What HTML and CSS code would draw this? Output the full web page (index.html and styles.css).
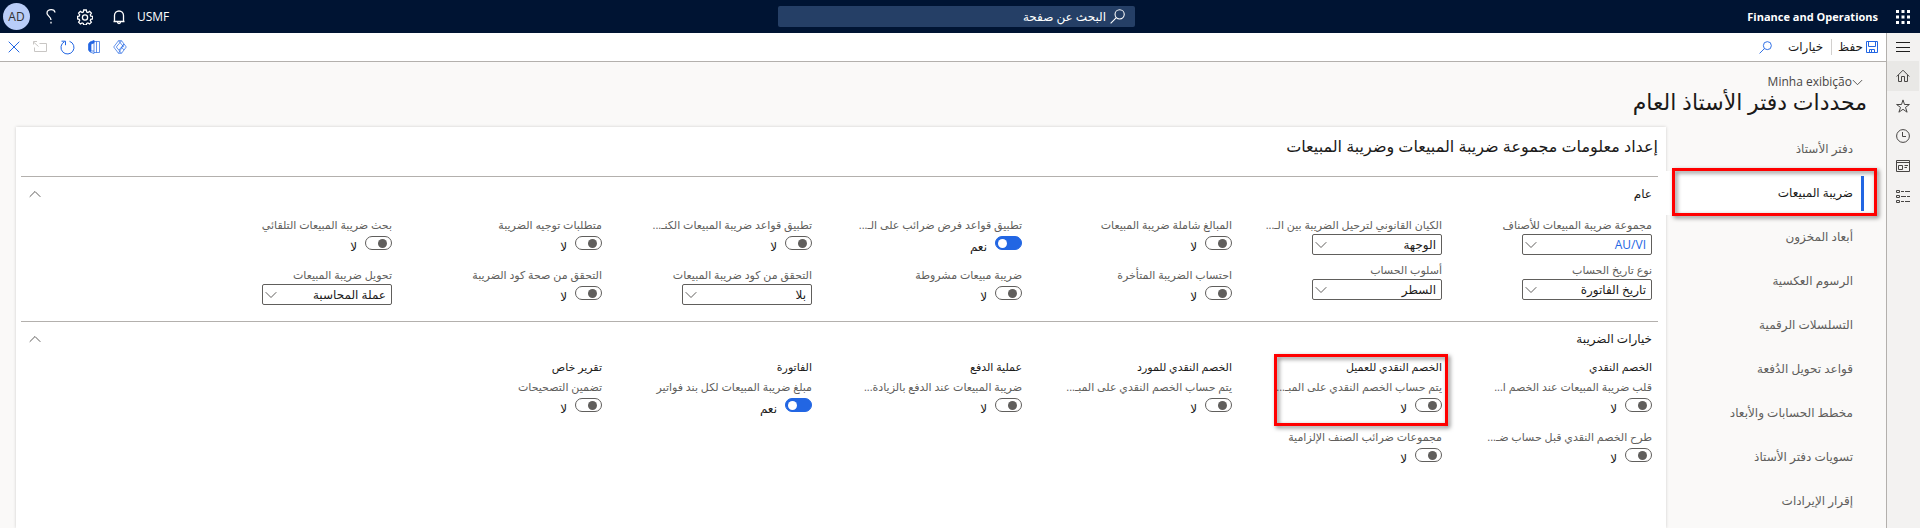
FILE: index.html
```html
<!DOCTYPE html>
<html lang="ar" dir="rtl">
<head>
<meta charset="utf-8">
<title>محددات دفتر الأستاذ العام</title>
<link rel="stylesheet" href="styles.css">
</head>
<body>
<svg class="defs" aria-hidden="true">
  <symbol id="chev-down" viewBox="0 0 12 8"><path d="M.7 1.200 6 6.500l5.300-5.300"/></symbol>
  <symbol id="chev-up" viewBox="0 0 12 8"><path d="M.7 6.800 6 1.500l5.300 5.300"/></symbol>
  <symbol id="search" viewBox="0 0 14 14"><circle cx="9" cy="5" r="4.300"/><path d="M5.900 8.100.6 13.400"/></symbol>
</svg>
<header class="topbar">
  <div class="topbar-start">
    <button class="icon-btn" aria-label="مشغل التطبيقات"><svg class="waffle" width="14" height="14" viewBox="0 0 14 14"><path d="M0 0h3v3H0zM5.500 0h3v3h-3zM11 0h3v3h-3zM0 5.500h3v3H0zM5.500 5.500h3v3h-3zM11 5.500h3v3h-3zM0 11h3v3H0zM5.500 11h3v3h-3zM11 11h3v3h-3z"/></svg></button>
    <span class="brand">Finance and Operations</span>
  </div>
  <label class="page-search"><svg class="line" width="15" height="15"><use href="#search"/></svg><input type="search" placeholder="البحث عن صفحة" aria-label="البحث عن صفحة"></label>
  <div class="topbar-end">
    <span class="company">USMF</span>
    <button class="icon-btn" aria-label="الإشعارات"><svg class="line bold" width="14" height="16" viewBox="0 0 14 16"><path d="M1.500 12.500h11M2.500 12.500V6.500a4.500 4.500 0 0 1 9 0v6M5.500 13a1.500 1.500 0 0 0 3 0"/></svg></button>
    <button class="icon-btn" aria-label="الإعدادات"><svg class="line bold" width="16" height="16" viewBox="0 0 16 16"><path d="M6.700 1h2.600l.4 2 1.200.5 1.700-1.100 1.800 1.800-1.100 1.700.5 1.200 1.900.3v2.500l-1.900.4-.5 1.200 1.100 1.700-1.800 1.800-1.700-1.100-1.200.5-.4 1.600H6.700l-.4-1.600-1.200-.5L3.400 15l-1.800-1.800 1.100-1.700-.5-1.200L.6 9.900V7.400l1.600-.3.5-1.200-1.100-1.700 1.800-1.800 1.700 1.100L6.300 3z"/><circle cx="8" cy="8.500" r="2.600"/></svg></button>
    <button class="icon-btn" aria-label="المساعدة"><svg class="line bold" width="10" height="15" viewBox="0 0 10 15"><path d="M9 3.500C8.700 1.600 7.200.7 5.200.7 2.900.7 1 2 1 4.200c0 2.500 4 3.600 4 6.800M5 12.800v1.700"/></svg></button>
    <button class="avatar">AD</button>
  </div>
</header>
<div class="shell">
  <nav class="rail" aria-label="التنقل">
    <a href="#" class="menu" aria-label="القائمة"><svg class="line" width="14" height="14" viewBox="0 0 14 14"><path d="M0 2.500h14M0 7.500h14M0 11.500h14"/></svg></a>
    <a href="#" class="active" aria-label="الصفحة الرئيسية"><svg class="line" width="14" height="14" viewBox="0 0 14 14"><path d="M.7 7.500 7 1.200l6.300 6.300M2.500 6v6.500h3v-5h3v5h3V6"/></svg></a>
    <a href="#" aria-label="المفضلة"><svg class="line" width="14" height="14" viewBox="0 0 14 14"><path d="m7 .9 1.500 4.600h4.900L9.500 8.400l1.600 4.800L7 10.300l-4.100 2.900 1.600-4.800L.6 5.500h4.900z"/></svg></a>
    <a href="#" aria-label="حديث"><svg class="line" width="14" height="14" viewBox="0 0 14 14"><circle cx="7" cy="7" r="6.400"/><path d="M6.500 3v4.500H10"/></svg></a>
    <a href="#" aria-label="مساحات العمل"><svg class="line" width="14" height="12" viewBox="0 0 14 12"><path d="M.5.5h13v11H.5zM.5 2.500h13M2.500 5.500h4v4h-4zM8.500 5.500H12M8.500 7.500H11"/></svg></a>
    <a href="#" aria-label="الوحدات النمطية"><svg class="line" width="14" height="13" viewBox="0 0 14 13"><path d="M.5.5h3v2h-3zM.5 5.500h3v2h-3zM.5 10.500h3v2h-3zM5 1.500h3M9 1.500h5M5 6.500h5M11 6.500h3M5 11.500h3M9 11.500h5"/></svg></a>
  </nav>
  <main class="main">
    <div class="toolbar">
      <div class="toolbar-start">
        <button class="tool"><svg class="line blue" width="12" height="12" viewBox="0 0 12 12"><path d="M.5.5h11v11H.5zM2.500.5v5h7v-5M3.500 11.500v-3h5v3M5.500 9v2.500"/></svg>حفظ</button>
        <button class="tool options">خيارات</button>
        <button class="tool" aria-label="بحث"><svg class="line blue" width="13" height="13"><use href="#search"/></svg></button>
      </div>
      <div class="toolbar-end">
        <button class="tool" aria-label="Power Apps"><svg class="line blue thin" width="14" height="14" viewBox="0 0 14 14"><path d="M5.500.7.700 7l4.800 6.300h3L13.300 7 8.500.7zM5.500.7l5.400 6.500M8.500.7 3.300 7l5.200 6.300M10.900 4 5.500 13.300M6 10l5-5.800M8.200 7l2.900 3"/></svg></button>
        <button class="tool" aria-label="Office"><svg class="line blue thin" width="12" height="14" viewBox="0 0 12 14"><path class="solid" d="M6 .5 2 2 .5 4v6L2 12l1-1V4l3-1z"/><path d="M2 12l4 1.500V.5M6 1.500h5.500v11H6M8.500 1.500v11M3 11h3"/></svg></button>
        <button class="tool" aria-label="تحديث"><svg class="line blue" width="15" height="15" viewBox="0 0 15 15"><path d="M9.500 1.300A6.500 6.500 0 1 1 4.500 1.700M1.500 1.200h4v4"/></svg></button>
        <button class="tool" aria-label="فتح في نافذة جديدة"><svg class="line muted" width="14" height="12" viewBox="0 0 14 12"><path d="M6.500 2.500h7v8h-12v-4M5.500 5.500l-5-4.500M.5 3.500v-3h3.500"/></svg></button>
        <button class="tool" aria-label="إغلاق"><svg class="line blue" width="12" height="12" viewBox="0 0 12 12"><path d="m.7.7 10.600 10.600M11.300.7.7 11.300"/></svg></button>
      </div>
    </div>
    <div class="page-head">
      <button class="view-btn"><svg class="line" width="11" height="7"><use href="#chev-down"/></svg><span dir="ltr">Minha exibição</span></button>
      <h1>محددات دفتر الأستاذ العام</h1>
    </div>
    <div class="content">
      <nav class="tabs" aria-label="الأقسام">
        <a href="#">دفتر الأستاذ</a>
        <a href="#" class="selected" aria-current="page">ضريبة المبيعات<span class="callout"></span></a>
        <a href="#">أبعاد المخزون</a>
        <a href="#">الرسوم العكسية</a>
        <a href="#">التسلسلات الرقمية</a>
        <a href="#">قواعد تحويل الدُفعة</a>
        <a href="#">مخطط الحسابات والأبعاد</a>
        <a href="#">تسويات دفتر الأستاذ</a>
        <a href="#">إقرار الإيرادات</a>
      </nav>
      <div class="panel">
        <h2>إعداد معلومات مجموعة ضريبة المبيعات وضريبة المبيعات</h2>
        <section>
          <div class="section-head"><h3>عام</h3><button aria-label="طي"><svg class="line" width="12" height="8"><use href="#chev-up"/></svg></button></div>
          <div class="columns">
            <div class="column">
              <div class="field"><label for="f1">مجموعة ضريبة المبيعات للأصناف</label><div class="select"><select id="f1" class="link"><option>AU/VI</option></select><svg class="line" width="12" height="8"><use href="#chev-down"/></svg></div></div>
              <div class="field"><label for="f2">نوع تاريخ الحساب</label><div class="select"><select id="f2"><option>تاريخ الفاتورة</option></select><svg class="line" width="12" height="8"><use href="#chev-down"/></svg></div></div>
            </div>
            <div class="column">
              <div class="field"><label for="f3">الكيان القانوني لترحيل الضريبة بين الـ...</label><div class="select"><select id="f3"><option>الوجهة</option></select><svg class="line" width="12" height="8"><use href="#chev-down"/></svg></div></div>
              <div class="field"><label for="f4">أسلوب الحساب</label><div class="select"><select id="f4"><option>السطر</option></select><svg class="line" width="12" height="8"><use href="#chev-down"/></svg></div></div>
            </div>
            <div class="column">
              <div class="field"><label for="f5">المبالغ شاملة ضريبة المبيعات</label><div class="toggle"><input type="checkbox" role="switch" id="f5"><span>لا</span></div></div>
              <div class="field"><label for="f6">احتساب الضريبة المتأخرة</label><div class="toggle"><input type="checkbox" role="switch" id="f6"><span>لا</span></div></div>
            </div>
            <div class="column">
              <div class="field"><label for="f7">تطبيق قواعد فرض ضرائب على الـ...</label><div class="toggle"><input type="checkbox" role="switch" id="f7" checked><span>نعم</span></div></div>
              <div class="field"><label for="f8">ضريبة مبيعات مشروطة</label><div class="toggle"><input type="checkbox" role="switch" id="f8"><span>لا</span></div></div>
            </div>
            <div class="column">
              <div class="field"><label for="f9">تطبيق قواعد ضريبة المبيعات الكنـ...</label><div class="toggle"><input type="checkbox" role="switch" id="f9"><span>لا</span></div></div>
              <div class="field"><label for="f10">التحقق من كود ضريبة المبيعات</label><div class="select"><select id="f10"><option>بلا</option></select><svg class="line" width="12" height="8"><use href="#chev-down"/></svg></div></div>
            </div>
            <div class="column">
              <div class="field"><label for="f11">متطلبات توجيه الضريبة</label><div class="toggle"><input type="checkbox" role="switch" id="f11"><span>لا</span></div></div>
              <div class="field"><label for="f12">التحقق من صحة كود الضريبة</label><div class="toggle"><input type="checkbox" role="switch" id="f12"><span>لا</span></div></div>
            </div>
            <div class="column">
              <div class="field"><label for="f13">بحث ضريبة المبيعات التلقائي</label><div class="toggle"><input type="checkbox" role="switch" id="f13"><span>لا</span></div></div>
              <div class="field"><label for="f14">تحويل ضريبة المبيعات</label><div class="select"><select id="f14"><option>عملة المحاسبة</option></select><svg class="line" width="12" height="8"><use href="#chev-down"/></svg></div></div>
            </div>
          </div>
        </section>
        <section>
          <div class="section-head"><h3>خيارات الضريبة</h3><button aria-label="طي"><svg class="line" width="12" height="8"><use href="#chev-up"/></svg></button></div>
          <div class="columns grouped">
            <div class="column">
              <h4>الخصم النقدي</h4>
              <div class="field"><label for="g1">قلب ضريبة المبيعات عند الخصم ا...</label><div class="toggle"><input type="checkbox" role="switch" id="g1"><span>لا</span></div></div>
              <div class="field"><label for="g2">طرح الخصم النقدي قبل حساب ضـ...</label><div class="toggle"><input type="checkbox" role="switch" id="g2"><span>لا</span></div></div>
            </div>
            <div class="column marked">
              <h4>الخصم النقدي للعميل</h4>
              <div class="field"><label for="g3">يتم حساب الخصم النقدي على المبـ...</label><div class="toggle"><input type="checkbox" role="switch" id="g3"><span>لا</span></div></div>
              <div class="field"><label for="g4">مجموعات ضرائب الصنف الإلزامية</label><div class="toggle"><input type="checkbox" role="switch" id="g4"><span>لا</span></div></div>
              <span class="callout"></span>
            </div>
            <div class="column">
              <h4>الخصم النقدي للمورد</h4>
              <div class="field"><label for="g5">يتم حساب الخصم النقدي على المبـ...</label><div class="toggle"><input type="checkbox" role="switch" id="g5"><span>لا</span></div></div>
            </div>
            <div class="column">
              <h4>عملية الدفع</h4>
              <div class="field"><label for="g6">ضريبة المبيعات عند الدفع بالزيادة...</label><div class="toggle"><input type="checkbox" role="switch" id="g6"><span>لا</span></div></div>
            </div>
            <div class="column">
              <h4>الفاتورة</h4>
              <div class="field"><label for="g7">مبلغ ضريبة المبيعات لكل بند فواتير</label><div class="toggle"><input type="checkbox" role="switch" id="g7" checked><span>نعم</span></div></div>
            </div>
            <div class="column">
              <h4>تقرير خاص</h4>
              <div class="field"><label for="g8">تضمين التصحيحات</label><div class="toggle"><input type="checkbox" role="switch" id="g8"><span>لا</span></div></div>
            </div>
          </div>
        </section>
      </div>
    </div>
  </main>
</div>
</body>
</html>
```
FILE: styles.css
```css
* { box-sizing: border-box; }
body {
  margin: 0;
  min-height: 100vh;
  display: flex;
  flex-direction: column;
  background: #faf9f8;
  color: #1b1a19;
  font-family: "Open Sans", "DejaVu Sans", sans-serif;
  font-size: 12px;
  line-height: 16px;
}
button, input, select { font: inherit; color: inherit; }
button { border: 0; padding: 0; background: none; display: flex; align-items: center; }
a { color: inherit; text-decoration: none; }
h1, h2, h3, h4 { margin: 0; font-weight: 400; }
svg { display: block; flex: none; }
.defs { position: absolute; width: 0; height: 0; }
.line { fill: none; stroke: currentColor; stroke-width: 1; }
.thin { stroke-width: .7; }
.bold { stroke-width: 1.3; }
.blue { color: #2266e3; }
.muted { color: #c8c6c4; }
.solid { fill: currentColor; }

.topbar {
  display: grid;
  grid-template-columns: 1fr 357px 1fr;
  align-items: center;
  height: 33px;
  padding: 0 10px 0 3px;
  background: #001433;
  color: #fff;
}
.topbar-start { display: flex; align-items: center; gap: 18px; }
.waffle { fill: #fff; }
.brand { font-size: 11px; font-weight: 700; direction: ltr; }
.page-search {
  display: flex;
  align-items: center;
  gap: 4px;
  height: 21px;
  padding: 0 10px;
  border-radius: 2px;
  background: #253f66;
}
.page-search input { flex: 1; min-width: 0; border: 0; padding: 0; outline: 0; background: none; }
.page-search input::placeholder { color: #fff; opacity: 1; }
.topbar-end { display: flex; align-items: center; justify-content: flex-end; }
.topbar-end .icon-btn { width: 34px; justify-content: center; }
.company { padding-left: 1px; }
.avatar {
  width: 27px;
  height: 27px;
  margin-right: 4px;
  justify-content: center;
  border-radius: 50%;
  background: #b9cdf8;
  color: #323130;
}

.shell { flex: 1; display: flex; }
.rail {
  width: 34px;
  flex: none;
  padding-right: 1px;
  border-left: 1px solid #b3b0ad;
  background: #f3f2f1;
  color: #484644;
}
.rail a { display: flex; align-items: center; justify-content: center; height: 30px; }
.rail .menu { height: 28px; color: #201f1e; }
.rail .active { background: #e9e8e6; }
.main { flex: 1; min-width: 0; display: flex; flex-direction: column; }

.toolbar {
  display: flex;
  justify-content: space-between;
  height: 29px;
  padding: 0 8px;
  border-bottom: 1px solid #b3b0ad;
  background: #fff;
}
.toolbar-start, .toolbar-end { display: flex; align-items: center; }
.toolbar-start { gap: 6px; }
.toolbar-end { gap: 13px; }
.tool { gap: 3px; }
.options { padding: 0 8px 0 10px; border-right: 1px solid #d2d0ce; }

.page-head { padding: 12px 19px 15px; }
.view-btn { height: 16px; padding-right: 4px; color: #484644; }
h1 { font-size: 22px; line-height: 22px; }

.content { flex: 1; display: flex; padding-left: 16px; }
.tabs { width: 220px; flex: none; color: #605e5c; }
.tabs a { position: relative; display: flex; align-items: center; height: 44px; padding-right: 33px; }
.tabs .selected { background: #fff; color: #1b1a19; margin-right: 16px; padding-right: 17px; }
.tabs .selected::before {
  content: "";
  position: absolute;
  top: 5px;
  bottom: 4px;
  right: 6px;
  width: 3px;
  background: #2266e3;
}
.callout {
  position: absolute;
  inset: -3px -7px -1px 6px;
  border: 3px solid #f00;
  filter: drop-shadow(2px 2px 2px rgba(0, 0, 0, .5));
  pointer-events: none;
}
.panel {
  flex: 1;
  min-width: 0;
  padding: 0 8px 0 5px;
  background: #fff;
  box-shadow: 0 0 3px rgba(0, 0, 0, .18);
}
h2 { height: 49px; padding-top: 7px; font-size: 16px; line-height: 24px; }
section { border-top: 1px solid #b3b0ad; padding-right: 6px; }
.section-head { display: flex; justify-content: space-between; align-items: center; height: 34px; padding-left: 8px; }
.section-head button { color: #605e5c; }
h3 { font-size: 12px; }
.columns { display: grid; grid-template-columns: repeat(7, 170px); column-gap: 40px; padding: 6px 0 4px; }
.grouped { padding-top: 3px; }
.column { position: relative; }
.marked .callout { inset: -5px -6px auto 2px; height: 72px; }
h4 { height: 20px; font-size: 11px; }
.field label { display: block; white-space: nowrap; height: 17px; color: #605e5c; font-size: 11px; }
.select { position: relative; width: 130px; margin-bottom: 7px; }
.select select {
  display: block;
  width: 100%;
  height: 21px;
  padding: 0 5px;
  border: 1px solid #605e5c;
  border-radius: 2px;
  background: #fff;
  appearance: none;
}
.select .link { color: #2266e3; }
.select svg { position: absolute; left: 3px; top: 7px; color: #605e5c; }
.toggle { display: flex; gap: 8px; height: 33px; padding-top: 2px; }
.toggle span { padding-top: 3px; }
.toggle input {
  appearance: none;
  width: 27px;
  height: 14px;
  margin: 0;
  padding: 2px 4px;
  border: 1px solid #605e5c;
  border-radius: 7px;
  background: #fff;
}
.toggle input::before { content: ""; display: block; width: 9px; height: 9px; border-radius: 50%; background: #605e5c; }
.toggle input:checked { padding-right: 14px; padding-left: 2px; border-color: #2266e3; background: #2266e3; }
.toggle input:checked::before { background: #fff; }
```
